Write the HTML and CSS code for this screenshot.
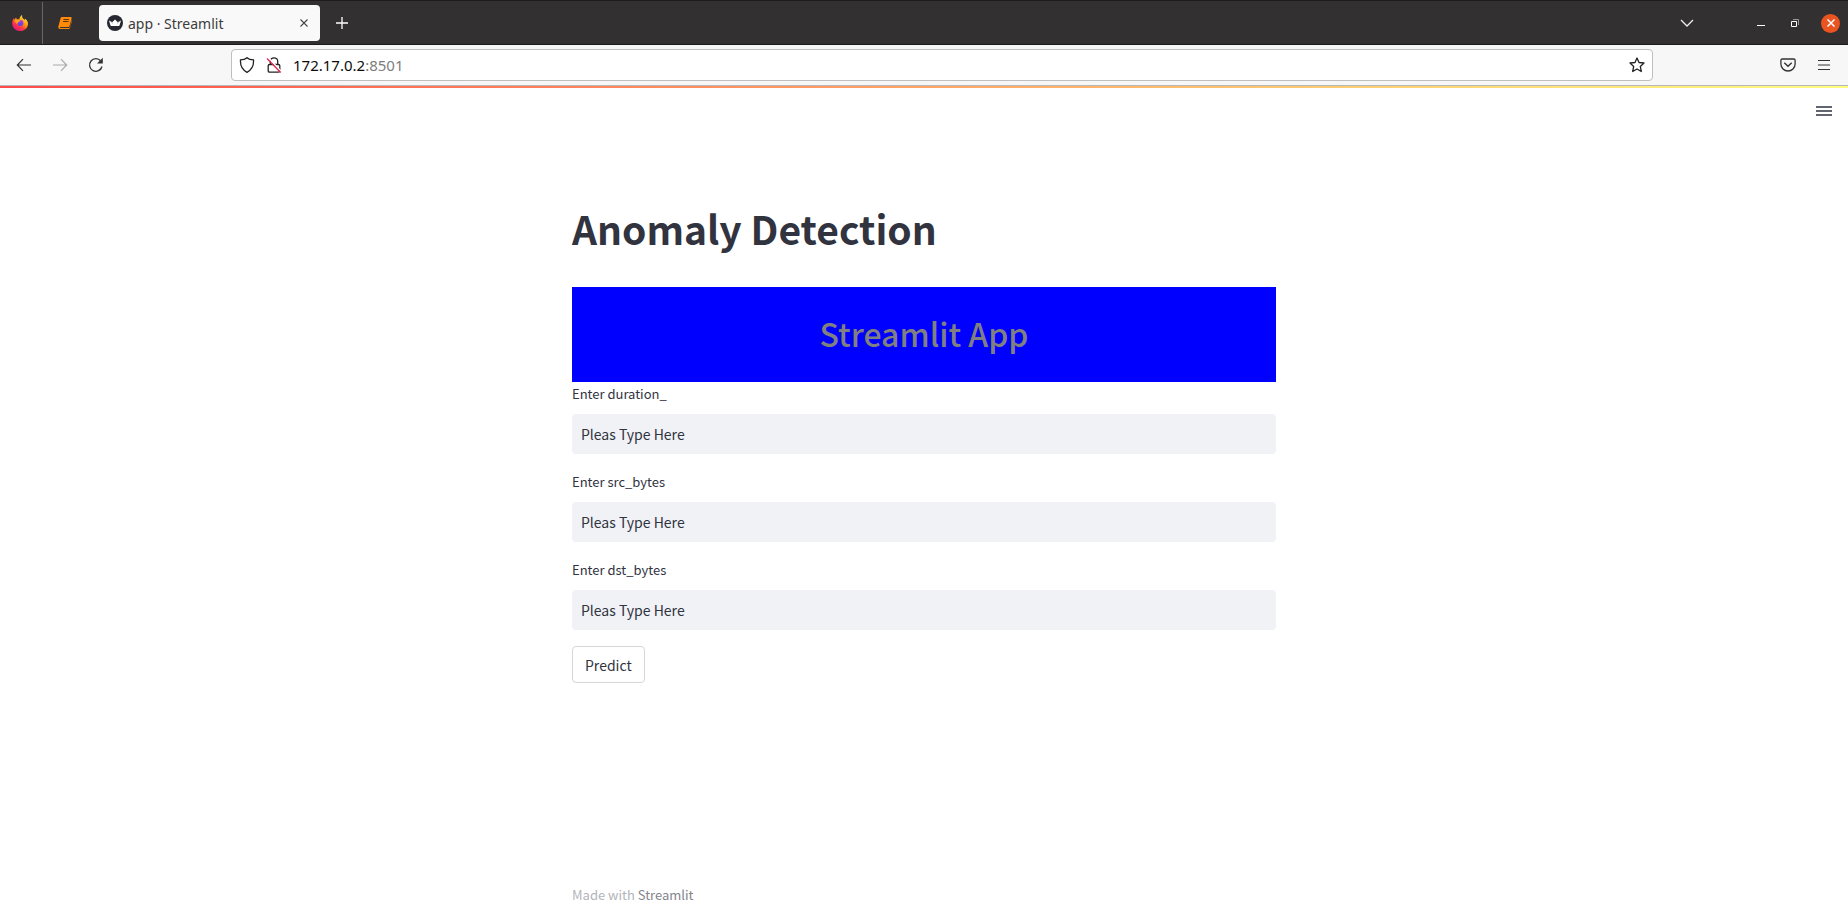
FILE: index.html
```html
<!DOCTYPE html>
<html lang="en">
<head>
<meta charset="utf-8">
<title>app · Streamlit</title>
<link rel="stylesheet" href="styles.css">
</head>
<body>
<header class="browser">
  <div class="tabstrip">
    <button class="pinned pinned-first" aria-label="Firefox View">
      <svg width="16" height="16" viewBox="0 0 16 16">
        <defs>
          <linearGradient id="fox" x1="0.85" y1="0.05" x2="0.2" y2="0.95"><stop offset="0" stop-color="#fff44f"/><stop offset="0.4" stop-color="#ff980e"/><stop offset="0.7" stop-color="#ff3647"/><stop offset="1" stop-color="#e31587"/></linearGradient>
          <linearGradient id="globe" x1="0.7" y1="0" x2="0.3" y2="1"><stop offset="0" stop-color="#b833e1"/><stop offset="1" stop-color="#4a4ae0"/></linearGradient>
        </defs>
        <path fill="url(#fox)" d="M10.2 0c-.5 1.700.2 2.800 1.100 3.700.7.6 1 1 1.200 1.600.3-.7.300-1.300.2-1.900 2 1.200 3.300 3.300 3.300 5.300 0 4.200-3.500 7.300-7.900 7.300S.2 12.700.2 8.500c0-2.300.6-4 1.800-5.500 0 .7.100 1.200.4 1.700.3-.9 1-1.700 1.900-2.300-.1.800.1 1.500.8 2 .8-.2 1.500-.1 2.100.1C7.500 2.900 8.400.9 10.200 0z"/>
        <circle cx="8.500" cy="8" r="2.900" fill="url(#globe)"/>
        <path fill="#ffa21a" d="M2.600 5.400c1.300-1.200 3-1 4.500-.3.700.3 1.300.5 1.700 1-.5.500-1.900.5-2.400 1.100-.5.700-1.500.7-1.500 2-.8-.7-.9-1.600-.6-2.300-.6.100-1.200.3-1.700.8z"/>
      </svg>
    </button>
    <button class="pinned" aria-label="Pinned tab">
      <svg width="14" height="14" viewBox="0 0 14 14">
        <path fill="#ff8a0a" d="M4 1h8.500c.9 0 1.300.6 1.100 1.400L11.500 10c-.2.700-.6 1-1.300 1H2.500c-.8 0-.8 1 0 1h7.800c.9 0 1.400-.4 1.700-1.200L13.700 4c.3.300.3.600.2 1l-2 7c-.2.700-.7 1-1.400 1H2.200C.8 13 0 12 .3 10.800L2.500 2.500C2.700 1.600 3.200 1 4 1z"/>
        <path d="M5.500 3.500H11M5 5.500h5.500" stroke="#5b3510" stroke-width="1"/>
      </svg>
    </button>
    <div class="tab">
      <svg width="16" height="16" viewBox="0 0 16 16">
        <circle cx="8" cy="8" r="8" fill="#262730"/>
        <path fill="#fff" d="M2 5.500l3.200 1.800L8 4.500l2.800 2.800L14 5.500l-1.500 5c-.1.300-.3.500-.6.500H4.100c-.3 0-.5-.2-.6-.5z"/>
        <path fill="#b9bac0" d="M2 5.500l3.200 1.800L6.500 9.500zM14 5.500l-3.200 1.800L9.500 9.500z"/>
      </svg>
      <span class="tab-title">app · Streamlit</span>
      <button class="tab-close" aria-label="Close tab">
        <svg width="8" height="8" viewBox="0 0 8 8"><path d="M.5.5l7 7M7.500.5l-7 7" stroke="#444" stroke-width="1.100"/></svg>
      </button>
    </div>
    <button class="new-tab" aria-label="New tab">
      <svg width="12" height="12" viewBox="0 0 12 12"><path d="M6 0v12M0 6h12" stroke="#fff" stroke-width="1.300"/></svg>
    </button>
    <div class="window-controls">
      <button class="all-tabs" aria-label="List all tabs"><svg width="14" height="8" viewBox="0 0 14 8"><path d="M1 1l6 6 6-6" fill="none" stroke="#eee" stroke-width="1.300"/></svg></button>
      <button class="minimize" aria-label="Minimize"><svg width="8" height="8" viewBox="0 0 8 8"><path d="M0 6.500h8" stroke="#fff"/></svg></button>
      <button class="restore" aria-label="Restore"><svg width="8" height="8" viewBox="0 0 8 8"><path d="M2 .5h5.500V6" fill="none" stroke="#999"/><path d="M.5 2.500h5v5h-5z" fill="none" stroke="#fff"/></svg></button>
      <button class="close" aria-label="Close window"><svg width="8" height="8" viewBox="0 0 8 8"><path d="M.5.5l7 7M7.500.5l-7 7" stroke="#fff" stroke-width="1.500"/></svg></button>
    </div>
  </div>
  <div class="toolbar">
    <nav class="history">
      <button aria-label="Back"><svg width="16" height="14" viewBox="0 0 16 14"><path d="M15 7H1.500M7 1.200L1.300 7 7 12.800" fill="none" stroke="#333" stroke-width="1.200"/></svg></button>
      <button aria-label="Forward"><svg width="16" height="14" viewBox="0 0 16 14"><path d="M1 7h13.500M9 1.200L14.700 7 9 12.800" fill="none" stroke="#aaa" stroke-width="1.200"/></svg></button>
      <button aria-label="Reload"><svg width="16" height="16" viewBox="0 0 16 16"><path d="M14 9.500A6.300 6.300 0 1 1 12.800 4" fill="none" stroke="#333" stroke-width="1.300"/><path d="M14.800.8v5.700H9z" fill="#333"/></svg></button>
    </nav>
    <form class="urlbar">
      <svg width="16" height="16" viewBox="0 0 16 16"><path d="M8 .7c1.600 1.500 4 2.100 6.500 2.200.4 5.300-1.600 9.900-6.500 12.400C3.100 12.800 1.100 8.200 1.500 2.900 4 2.800 6.400 2.200 8 .7z" fill="none" stroke="#222" stroke-width="1.300"/></svg>
      <svg width="16" height="16" viewBox="0 0 16 16"><path d="M4.300 7V4.300C4.300 2.300 5.900.8 8 .8s3.700 1.500 3.700 3.500V7M3.600 7.500h8.800c.9 0 1.400.5 1.400 1.300v5c0 .8-.5 1.300-1.400 1.300H3.600c-.9 0-1.400-.5-1.400-1.300v-5c0-.8.5-1.300 1.400-1.300z" fill="none" stroke="#222" stroke-width="1.300"/><path d="M2.500.8l13 14" stroke="#fff" stroke-width="1.500"/><path d="M1 1.500l13.700 14" stroke="#e22850" stroke-width="1.300"/></svg>
      <a class="address" href="#">172.17.0.2<span class="port">:8501</span></a>
      <button type="button" aria-label="Bookmark"><svg width="16" height="16" viewBox="0 0 16 16"><path d="M8 1l2 4.500 5 .5-3.700 3.400 1 5.100L8 12l-4.300 2.500 1-5.100L1 6l5-.5z" fill="none" stroke="#222" stroke-width="1.300" stroke-linejoin="round"/></svg></button>
    </form>
    <div class="tools">
      <button aria-label="Save to Pocket"><svg width="16" height="14" viewBox="0 0 16 14"><path d="M2.200 1h11.600c.8 0 1.300.5 1.300 1.300V6c0 4-3.200 7-7.100 7S.9 10 .9 6V2.300C.9 1.500 1.400 1 2.200 1z" fill="none" stroke="#333" stroke-width="1.300"/><path d="M4.300 4.800L8 8.300l3.700-3.500" fill="none" stroke="#333" stroke-width="1.400"/></svg></button>
      <button aria-label="Open application menu"><svg width="12" height="10" viewBox="0 0 12 10"><path d="M0 .5h12M0 5h12M0 9.500h12" stroke="#333"/></svg></button>
    </div>
  </div>
</header>
<div class="decoration"></div>
<div class="app-header">
  <button aria-label="Main menu"><svg width="16" height="10" viewBox="0 0 16 10"><path d="M0 1h16M0 5h16M0 9h16" stroke="#31333f" stroke-width="1.700"/></svg></button>
</div>
<main class="content">
  <h1>Anomaly Detection</h1>
  <div class="banner"><h2>Streamlit App</h2></div>
  <form class="form">
    <div class="field">
      <label for="duration">Enter duration_</label>
      <input id="duration" type="text" value="Pleas Type Here">
    </div>
    <div class="field">
      <label for="src">Enter src_bytes</label>
      <input id="src" type="text" value="Pleas Type Here">
    </div>
    <div class="field">
      <label for="dst">Enter dst_bytes</label>
      <input id="dst" type="text" value="Pleas Type Here">
    </div>
    <button class="predict" type="button">Predict</button>
  </form>
</main>
<footer class="footer">Made with <a href="#">Streamlit</a></footer>
</body>
</html>
```

FILE: styles.css
```css
* { box-sizing: border-box; }

body {
  margin: 0;
  min-height: 100vh;
  display: flex;
  flex-direction: column;
  background: #fff;
  color: #31333f;
  font-family: "Noto Sans CJK SC", sans-serif;
  font-size: 14px;
}

button {
  display: flex;
  align-items: center;
  justify-content: center;
  padding: 0;
  border: 0;
  background: none;
  color: inherit;
  font: inherit;
}

svg { display: block; flex: none; }

/* Browser chrome */
.browser { font-family: "Noto Sans", sans-serif; }

.tabstrip {
  display: flex;
  align-items: center;
  height: 45px;
  padding-top: 1px;
  background: #333031;
  border-top: 1px solid #1d1b1c;
  border-bottom: 1px solid #1d1b1c;
}

.pinned { width: 43px; height: 100%; }
.pinned-first { padding-right: 3px; border-right: 1px solid #6a6768; }

.tab {
  display: flex;
  align-items: center;
  gap: 5px;
  width: 221px;
  height: 36px;
  margin-left: 13px;
  padding: 0 8px;
  border-radius: 4px;
  background: #f9f9f9;
  color: #3c3c3c;
}

.tab-title { flex: 1; }
.tab-close { width: 16px; height: 16px; }
.new-tab { width: 44px; height: 36px; }

.window-controls {
  display: flex;
  align-items: center;
  margin-left: auto;
  padding-right: 8px;
}

.all-tabs { margin-right: 63px; }
.minimize { margin-right: 26px; }
.restore { margin-right: 22px; }

.close {
  width: 19px;
  height: 19px;
  border-radius: 50%;
  background: #e95420;
}

.toolbar {
  display: flex;
  align-items: center;
  height: 41px;
  background: #f7f7f7;
  border-bottom: 1px solid #b8b8b8;
}

.history {
  display: flex;
  align-items: center;
  gap: 20px;
  width: 231px;
  padding-left: 16px;
}

.urlbar {
  display: flex;
  align-items: center;
  gap: 11px;
  flex: 1;
  height: 32px;
  padding: 0 7px;
  border: 1px solid #bfbfbf;
  border-radius: 4px;
  background: #fff;
}

.address {
  flex: 1;
  color: #0c0c0d;
  font-size: 15px;
  text-decoration: none;
}

.port { color: #7d7d7d; }

.tools {
  display: flex;
  align-items: center;
  justify-content: flex-end;
  gap: 22px;
  width: 195px;
  padding-right: 18px;
}

/* Streamlit page */
.decoration {
  height: 2px;
  background: linear-gradient(to right, #ff4b4b, #fffd80);
}

.app-header {
  display: flex;
  justify-content: flex-end;
  padding: 18px 16px;
}

.content,
.footer {
  width: 100%;
  max-width: 704px;
  margin: 0 auto;
}

.content { flex: 1; padding-top: 65px; }

h1 {
  margin: 0 0 29px;
  font-size: 39px;
  font-weight: 700;
  line-height: 59px;
}

.banner {
  padding: 23px 10px 25px;
  background: #00f;
  color: #808080;
  text-align: center;
}

h2 {
  margin: 0;
  font-size: 32px;
  font-weight: 500;
  line-height: 47px;
}

.form {
  display: flex;
  flex-direction: column;
  align-items: flex-start;
  gap: 16px;
}

.field { width: 100%; }

label {
  display: block;
  margin-bottom: 8px;
  font-size: 13px;
  line-height: 24px;
}

input {
  display: block;
  width: 100%;
  height: 40px;
  padding: 0 9px;
  border: 0;
  border-radius: 4px;
  background: #f0f2f6;
  color: #31333f;
  font: inherit;
}

.predict {
  height: 37px;
  padding: 0 12px;
  border: 1px solid #d6d6d9;
  border-radius: 4px;
  background: #fff;
}

.footer {
  padding-bottom: 4px;
  color: #b3b4ba;
  font-size: 13px;
  line-height: 20px;
}

.footer a { color: #83848c; text-decoration: none; }
```
